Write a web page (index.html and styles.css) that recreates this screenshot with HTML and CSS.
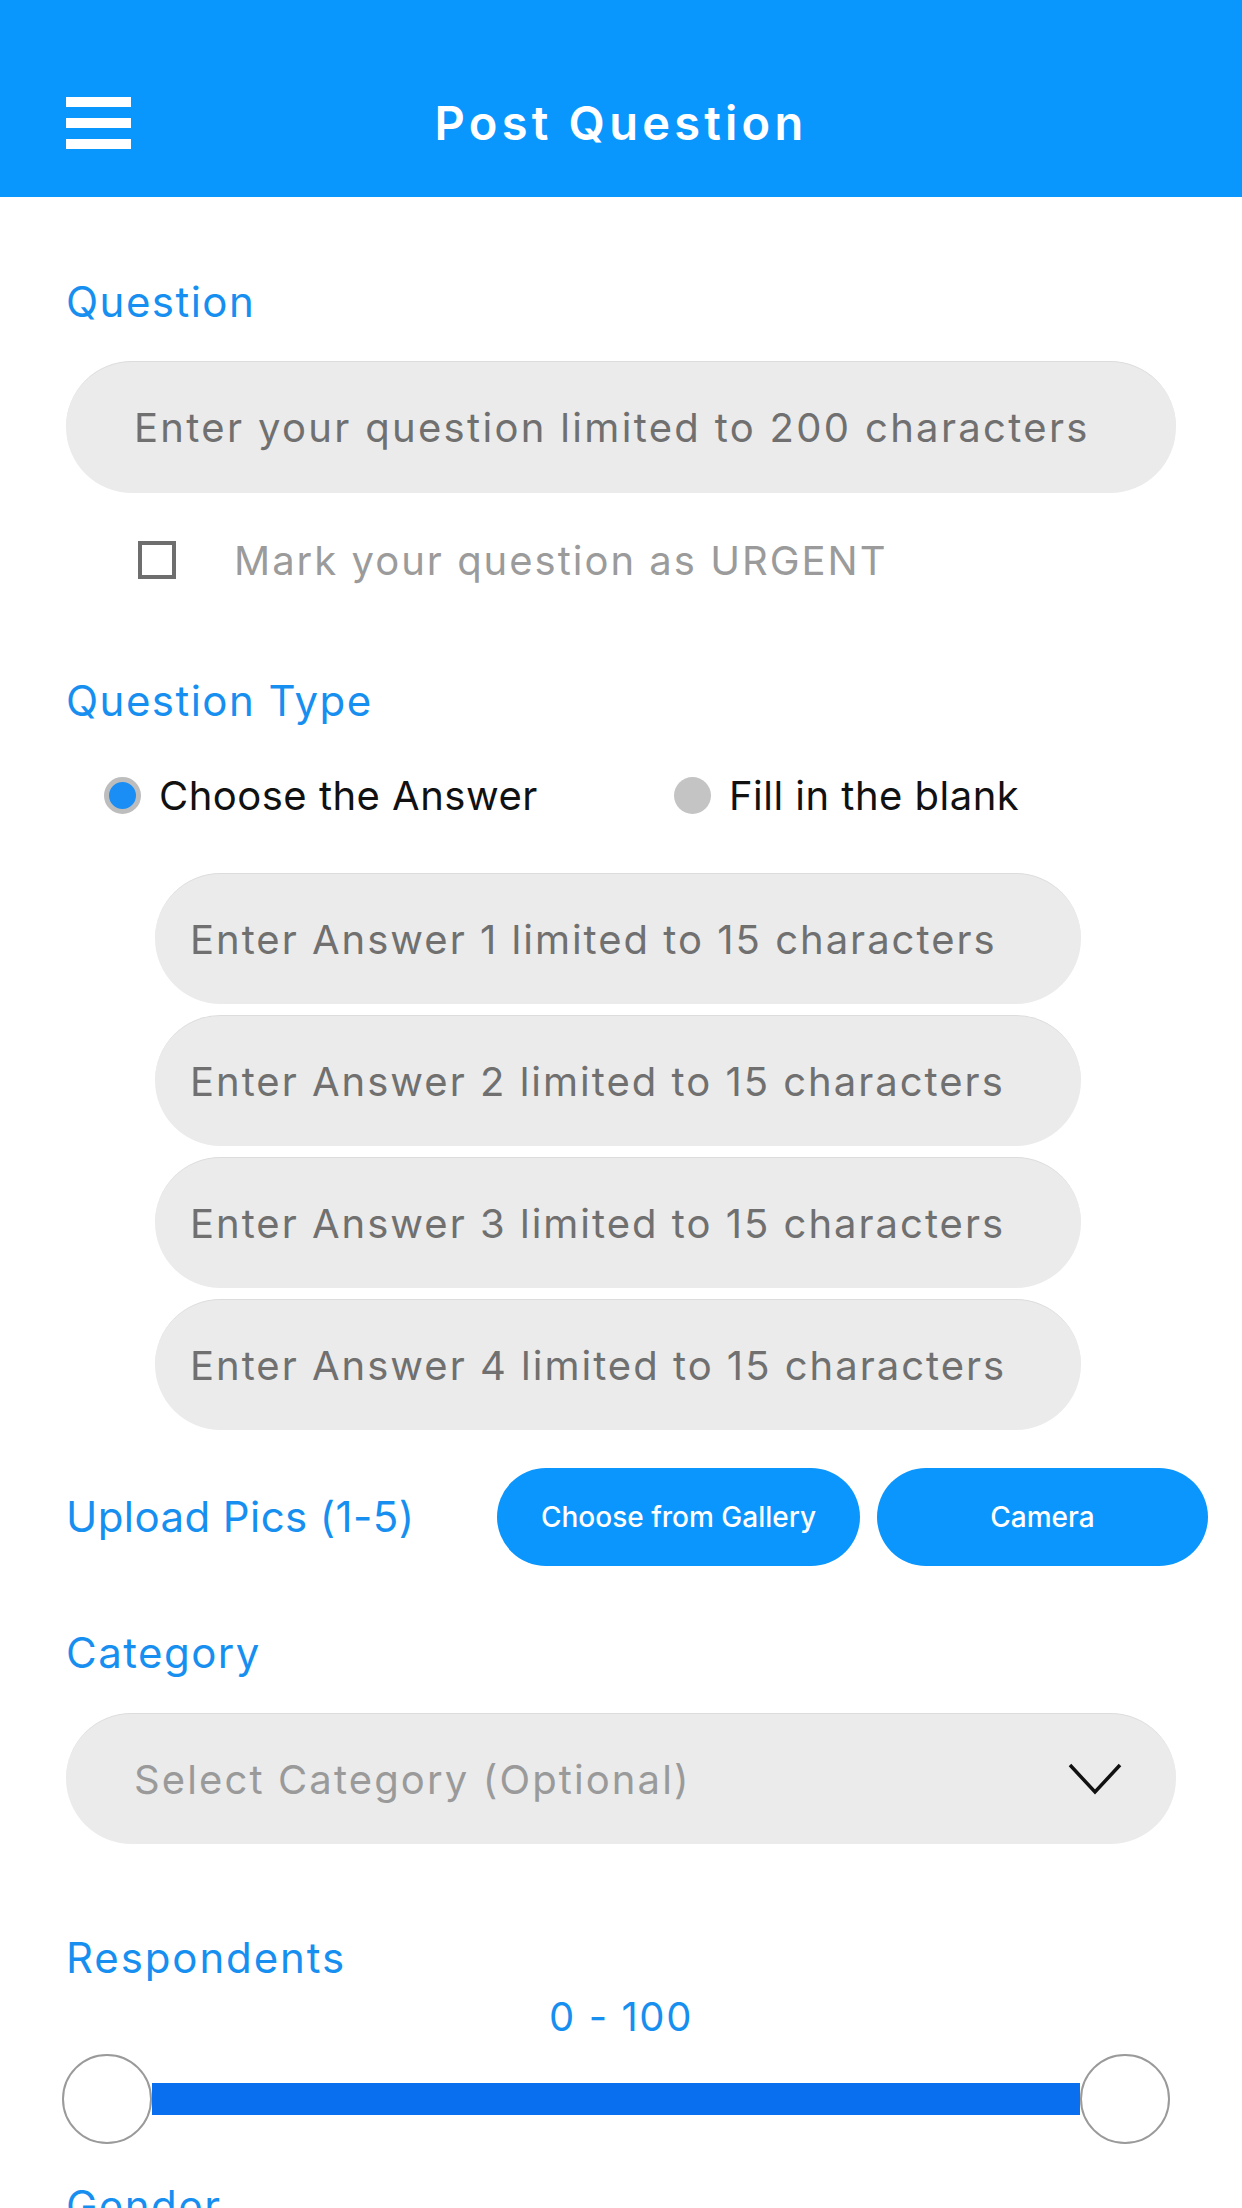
FILE: index.html
```html
<!DOCTYPE html>
<html lang="en">
<head>
    <meta charset="UTF-8">
    <meta name="viewport" content="width=device-width, initial-scale=1.0">
    <title>Post Question</title>
    <link rel="stylesheet" href="styles.css">
</head>
<body>
    <div class="topBar">
        <div class="menuIcon">
            <span></span>
            <span></span>
            <span></span>
        </div>
        <h1 class="topTitle">Post Question</h1>
        <div></div>
    </div>

    <div id="formContainer">
        <!-- Question -->
        <div class="fieldLabel">Question</div>
        <input type="text" class="pillInput" placeholder="Enter your question limited to 200 characters">
        <label class="urgentRow">
            <span class="checkBox"></span>
            <span class="urgentText">Mark your question as URGENT</span>
        </label>

        <!-- Question type -->
        <div class="fieldLabel typeLabel">Question Type</div>
        <div class="radioRow">
            <label class="radioItem">
                <span class="radioDot checked"></span>
                <span>Choose the Answer</span>
            </label>
            <label class="radioItem">
                <span class="radioDot"></span>
                <span>Fill in the blank</span>
            </label>
        </div>
        <div class="answerList">
            <input type="text" class="pillInput" placeholder="Enter Answer 1 limited to 15 characters">
            <input type="text" class="pillInput" placeholder="Enter Answer 2 limited to 15 characters">
            <input type="text" class="pillInput" placeholder="Enter Answer 3 limited to 15 characters">
            <input type="text" class="pillInput" placeholder="Enter Answer 4 limited to 15 characters">
        </div>

        <!-- Pictures -->
        <div class="uploadRow">
            <div class="fieldLabel">Upload Pics (1-5)</div>
            <div class="uploadButtons">
                <button class="button gallery">Choose from Gallery</button>
                <button class="button camera">Camera</button>
            </div>
        </div>

        <!-- Category -->
        <div class="fieldLabel categoryLabel">Category</div>
        <div class="selectWrapper">
            <select class="pillSelect">
                <option value="">Select Category (Optional)</option>
            </select>
            <svg class="chevron" width="54" height="32" viewBox="0 0 54 32">
                <polyline points="2,2 27,29 52,2" fill="none" stroke="#111" stroke-width="3.5"/>
            </svg>
        </div>

        <!-- Respondents -->
        <div class="fieldLabel respondLabel">Respondents</div>
        <div class="rangeValue">0 - 100</div>
        <div class="rangeSlider">
            <span class="thumb"></span>
            <span class="track"></span>
            <span class="thumb"></span>
        </div>

        <div class="fieldLabel genderLabel">Gender</div>
    </div>
</body>
</html>
```

FILE: styles.css
```css
body {
    margin: 0;
    background: #fff;
    font-family: Inter, "Open Sans", sans-serif;
    overflow: hidden;
}
.topBar {
    display: grid;
    grid-template-columns: 1fr auto 1fr;
    align-items: center;
    height: 149px;
    padding-top: 48px;
    background-color: #0a97fd;
}
.menuIcon {
    display: flex;
    flex-direction: column;
    gap: 11px;
    margin-left: 66px;
}
.menuIcon span {
    display: block;
    width: 65px;
    height: 10px;
    background: #fff;
}
.topTitle {
    margin: 0;
    color: #fff;
    font-size: 47px;
    font-weight: 600;
    letter-spacing: 0.09em;
    line-height: 1;
}
#formContainer {
    padding: 0 66px;
}
.fieldLabel {
    color: #178ff0;
    font-size: 42px;
    line-height: 42px;
    letter-spacing: 0.035em;
    margin-top: 84px;
}
.pillInput {
    display: block;
    box-sizing: border-box;
    width: 100%;
    height: 132px;
    margin-top: 38px;
    padding: 0 0 0 68px;
    border: none;
    border-top: 1px solid #dcdcdc;
    border-radius: 66px;
    background-color: #ebebeb;
    font-family: Inter, "Open Sans", sans-serif;
    font-size: 40px;
    letter-spacing: 0.058em;
    color: #333;
    outline: none;
}
.pillInput::placeholder {
    color: #707070;
}
.urgentRow {
    display: flex;
    align-items: center;
    height: 38px;
    margin-top: 48px;
    padding-left: 72px;
}
.checkBox {
    box-sizing: border-box;
    width: 38px;
    height: 38px;
    border: 4px solid #6e6e6e;
}
.urgentText {
    margin-left: 58px;
    color: #9b9b9b;
    font-size: 40px;
    letter-spacing: 0.05em;
}
.typeLabel {
    margin-top: 101px;
}
.radioRow {
    display: grid;
    grid-template-columns: 570px auto;
    align-items: center;
    height: 37px;
    margin-top: 55px;
    padding-left: 38px;
}
.radioItem {
    display: flex;
    align-items: center;
    gap: 18px;
    height: 37px;
    line-height: 37px;
    color: #111;
    font-size: 40px;
    letter-spacing: 0.012em;
}
.radioDot {
    box-sizing: border-box;
    width: 37px;
    height: 37px;
    border-radius: 50%;
    background: #c4c4c4;
}
.radioDot.checked {
    border: 5px solid #bdbdbd;
    background: #1a8ef5;
}
.answerList {
    display: flex;
    flex-direction: column;
    gap: 11px;
    margin: 59px 0 0 89px;
    width: 926px;
}
.answerList .pillInput {
    height: 131px;
    margin-top: 0;
    padding-left: 35px;
    letter-spacing: 0.05em;
}
.uploadRow {
    display: flex;
    align-items: center;
    margin-top: 38px;
    margin-right: -32px;
}
.uploadRow .fieldLabel {
    margin-top: 0;
    letter-spacing: 0.01em;
}
.uploadButtons {
    display: flex;
    gap: 17px;
    margin-left: auto;
}
.button {
    height: 98px;
    border: none;
    border-radius: 49px;
    background-color: #0a96fd;
    color: #fff;
    font-family: Inter, "Open Sans", sans-serif;
    font-size: 28px;
    font-weight: 500;
    letter-spacing: 0;
    cursor: pointer;
}
.button.gallery {
    width: 363px;
}
.button.camera {
    width: 331px;
}
.categoryLabel {
    margin-top: 66px;
}
.selectWrapper {
    position: relative;
    margin-top: 39px;
}
.pillSelect {
    display: block;
    width: 100%;
    height: 131px;
    padding: 0 0 0 68px;
    border: none;
    border-top: 1px solid #dcdcdc;
    border-radius: 66px;
    background-color: #ebebeb;
    appearance: none;
    font-family: Inter, "Open Sans", sans-serif;
    font-size: 40px;
    letter-spacing: 0.053em;
    color: #9a9a9a;
}
.chevron {
    position: absolute;
    top: 50px;
    right: 54px;
}
.respondLabel {
    margin-top: 93px;
    letter-spacing: 0.045em;
}
.rangeValue {
    margin-top: 18px;
    color: #178ff0;
    font-size: 40px;
    line-height: 40px;
    letter-spacing: 0.04em;
    text-align: center;
}
.rangeSlider {
    display: flex;
    align-items: center;
    height: 90px;
    margin: 17px 6px 0 -4px;
}
.thumb {
    box-sizing: border-box;
    width: 90px;
    height: 90px;
    border: 2px solid #9a9a9a;
    border-radius: 50%;
    background: #fff;
}
.track {
    flex: 1;
    height: 32px;
    background-color: #0a6fef;
}
.genderLabel {
    margin-top: 41px;
}
```
